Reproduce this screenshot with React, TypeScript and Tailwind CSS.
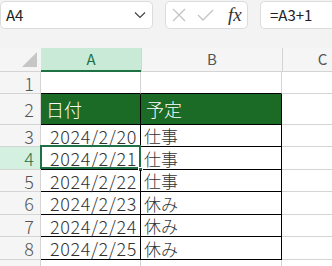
import React from "react";

const rows = [
  { n: 1, h: "h-[22px]", a: "", b: "" },
  { n: 2, h: "h-[31px]", a: "日付", b: "予定" },
  { n: 3, h: "h-[22px]", a: "2024/2/20", b: "仕事" },
  { n: 4, h: "h-[23px]", a: "2024/2/21", b: "仕事" },
  { n: 5, h: "h-[22px]", a: "2024/2/22", b: "仕事" },
  { n: 6, h: "h-[23px]", a: "2024/2/23", b: "休み" },
  { n: 7, h: "h-[22px]", a: "2024/2/24", b: "休み" },
  { n: 8, h: "h-[23px]", a: "2024/2/25", b: "休み" },
  { n: 9, h: "h-[22px]", a: "", b: "" },
];

const font = { fontFamily: '"Noto Sans CJK JP", "Noto Sans", sans-serif' };

function FormulaBar() {
  return (
    <div className="flex h-[48px] bg-[#f3f3f3] pt-px">
      <div className="flex h-[28px] w-[153px] items-center justify-between rounded-[5px] border border-[#dcdcdc] bg-white pl-[5px] pr-[6px]">
        <span className="text-[15px] text-[#222]" style={font}>A4</span>
        <svg width="12" height="8" viewBox="0 0 12 8">
          <path d="M1 1.5 L6 6.5 L11 1.5" fill="none" stroke="#444" strokeWidth="1.2" />
        </svg>
      </div>
      <div className="ml-[12px] flex h-[28px] w-[83px] items-center gap-[10px] rounded-[5px] border border-[#dcdcdc] bg-white pl-[5px]">
        <svg width="16" height="16" viewBox="0 0 16 16">
          <path d="M2 2 L14 14 M14 2 L2 14" stroke="#c4c4c4" strokeWidth="1.3" />
        </svg>
        <svg width="17" height="14" viewBox="0 0 17 14">
          <path d="M1 7 L6 12 L16 2" fill="none" stroke="#c4c4c4" strokeWidth="1.3" />
        </svg>
        <span
          className="ml-[4px] text-[19px] italic text-[#333]"
          style={{ fontFamily: '"Liberation Serif", serif' }}
        >
          fx
        </span>
      </div>
      <div className="ml-[12px] flex h-[28px] flex-1 items-center rounded-l-[5px] border border-r-0 border-[#dcdcdc] bg-white pl-[9px]">
        <span className="text-[15px] text-[#222]" style={font}>=A3+1</span>
      </div>
    </div>
  );
}

function HeaderRow() {
  return (
    <div className="flex h-[24px] bg-[#f5f5f5]" style={font}>
      <div className="relative w-[41px] border-b border-[#d4d4d4]">
        <svg className="absolute left-[22px] top-[4px]" width="15" height="15" viewBox="0 0 15 15">
          <path d="M15 0 L15 15 L0 15 Z" fill="#c6c6c6" />
        </svg>
      </div>
      <div className="flex w-[100px] items-center justify-center border-b-2 border-[#1e7145] bg-[#caead8] text-[15px] text-[#1e7145]">
        A
      </div>
      <div className="flex w-[141px] items-center justify-center border-b border-l border-[#d4d4d4] text-[15px] text-[#555]">
        B
      </div>
      <div className="flex flex-1 items-center justify-center border-b border-l border-[#d4d4d4] pl-[30px] text-[15px] text-[#555]">
        C
      </div>
    </div>
  );
}

function Row({ r }: { r: (typeof rows)[number] }) {
  const inTable = r.n >= 2 && r.n <= 8;
  const isHead = r.n === 2;
  const isActive = r.n === 4;
  const line = inTable ? "border-black" : "border-[#d4d4d4]";
  const nextInTable = r.n === 1;
  return (
    <div className={`flex ${r.h} leading-none`} style={font}>
      <div
        className={`flex w-[41px] items-center justify-end border-b border-r border-[#d4d4d4] pr-[6px] text-[18px] font-light ${
          isActive ? "bg-[#d3f0e0] text-[#1e7145]" : "bg-[#f5f5f5] text-[#555]"
        }`}
      >
        {r.n < 9 ? r.n : ""}
      </div>
      <div
        className={`relative flex w-[100px] items-center border-b border-r ${
          nextInTable ? "border-b-black border-r-[#d4d4d4]" : line
        } ${
          isHead
            ? "justify-start bg-[#1b6b27] pl-[5px] text-[18px] font-light text-white"
            : "justify-end pr-[3px] text-[18px] font-light tracking-[0.6px] text-[#333]"
        }`}
      >
        {r.a}
        {isActive && (
          <>
            <div className="absolute left-[-1px] top-[-2px] h-[24px] w-[101px] border-2 border-[#1e7145]" />
            <div className="absolute bottom-[-3px] right-[-3px] h-[5px] w-[5px] border border-white bg-[#1e7145]" />
          </>
        )}
      </div>
      <div
        className={`flex w-[141px] items-center border-b border-r ${
          nextInTable ? "border-b-black border-r-[#d4d4d4]" : line
        } ${
          isHead
            ? "bg-[#1b6b27] pl-[5px] text-[18px] font-light text-white"
            : "pl-[3px] text-[17px] font-light text-[#333]"
        }`}
      >
        {r.b}
      </div>
      <div className="flex-1 border-b border-[#d4d4d4]" />
    </div>
  );
}

export default function App() {
  return (
    <div className="h-[266px] w-[332px] overflow-hidden bg-white">
      <FormulaBar />
      <HeaderRow />
      {rows.map((r) => (
        <Row key={r.n} r={r} />
      ))}
    </div>
  );
}
